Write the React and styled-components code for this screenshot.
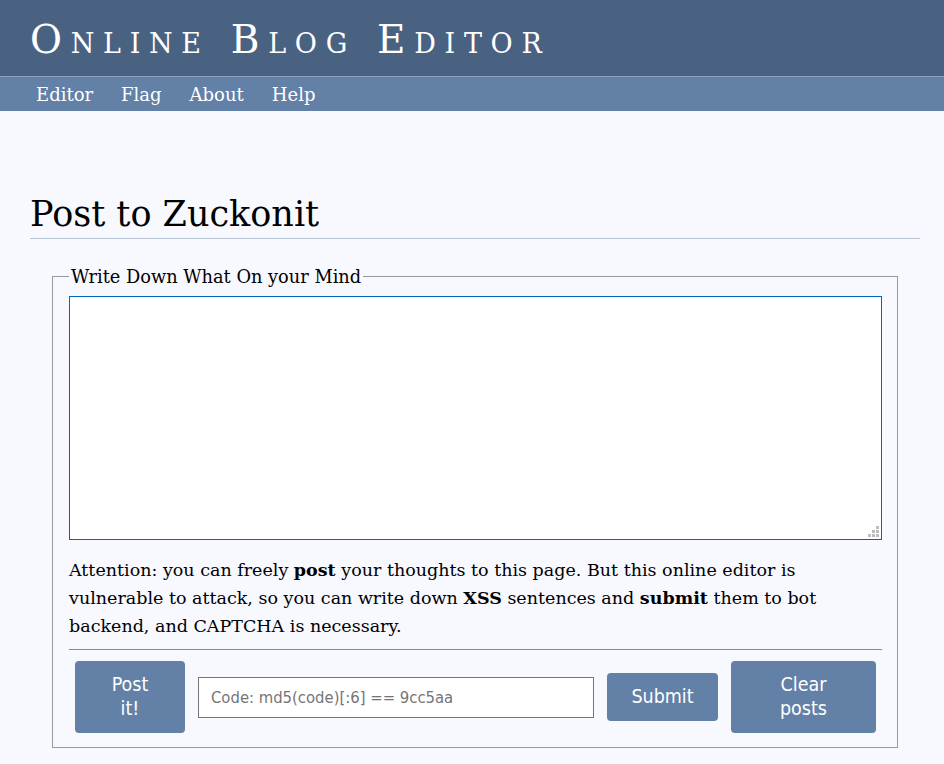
import React from "react";
import styled, { createGlobalStyle } from "styled-components";

const Global = createGlobalStyle`
  html, body { margin: 0; padding: 0; background: #f8f8ff; }
  body { font-family: "DejaVu Serif", Georgia, serif; color: #000; }
  * { box-sizing: border-box; }
`;

const Header = styled.header`
  background: #4a6282;
  height: 76px;
  display: flex;
  align-items: center;
  padding-left: 30px;
`;

const Title = styled.h1`
  margin: 0;
  color: #fff;
  font-family: "DejaVu Serif", Georgia, serif;
  font-weight: normal;
  font-size: 39px;
  font-variant: small-caps;
  letter-spacing: 8.7px;
  line-height: 1;
  padding-top: 2px;
`;

const Nav = styled.nav`
  background: #6380a6;
  border-top: 1px solid #8ea3c0;
  height: 35px;
  display: flex;
  align-items: center;
  padding-left: 36px;
  gap: 28px;
`;

const NavLink = styled.a`
  color: #fff;
  font-size: 18px;
  text-decoration: none;
  font-family: "DejaVu Serif", Georgia, serif;
`;

const Main = styled.main`
  padding: 83px 24px 16px 30px;
`;

const Heading = styled.h2`
  margin: 0;
  font-weight: normal;
  font-size: 35px;
  line-height: 40px;
  padding-bottom: 4px;
  border-bottom: 1px solid #b8c4d4;
`;

const Fieldset = styled.fieldset`
  margin: 27px 22px 0 22px;
  border: 1px solid #9a9a9a;
  padding: 9px 15px 14px 16px;
`;

const Legend = styled.legend`
  font-size: 17.8px;
  padding: 0 2px;
  margin-left: 0;
`;

const AreaWrap = styled.div`
  position: relative;
`;

const TextArea = styled.textarea`
  display: block;
  width: 100%;
  height: 244px;
  border: 1px solid #0067c0;
  background: #fff;
  resize: none;
  outline: none;
`;

const Grip = styled.svg`
  position: absolute;
  right: 3px;
  bottom: 3px;
  width: 11px;
  height: 11px;
`;

const Note = styled.p`
  margin: 16px 0 0 0;
  font-size: 17.5px;
  line-height: 28px;
`;

const Rule = styled.hr`
  margin: 9px 0 0 0;
  border: none;
  border-top: 1px solid #8a8a8a;
`;

const Actions = styled.div`
  display: flex;
  align-items: center;
  gap: 13px;
  padding: 11px 6px 0 6px;
`;

const Button = styled.button`
  background: #6380a6;
  color: #fff;
  border: none;
  border-radius: 4px;
  font-family: "DejaVu Sans Condensed", "DejaVu Sans", Tahoma, sans-serif;
  font-size: 19.5px;
  line-height: 24px;
  width: ${(p) => p.$w}px;
  height: ${(p) => p.$h}px;
  padding: 0 ${(p) => p.$pad}px;
  flex-shrink: 0;
`;

const CodeInput = styled.input`
  width: 396px;
  height: 41px;
  border: 1px solid #767676;
  background: #fff;
  padding: 0 12px;
  font-family: "DejaVu Sans Condensed", "DejaVu Sans", Tahoma, sans-serif;
  font-size: 16.5px;
  &::placeholder { color: #757575; }
`;

export default function App() {
  return (
    <>
      <Global />
      <Header>
        <Title>Online Blog Editor</Title>
      </Header>
      <Nav>
        <NavLink href="#">Editor</NavLink>
        <NavLink href="#">Flag</NavLink>
        <NavLink href="#">About</NavLink>
        <NavLink href="#">Help</NavLink>
      </Nav>
      <Main>
        <Heading>Post to Zuckonit</Heading>
        <Fieldset>
          <Legend>Write Down What On your Mind</Legend>
          <AreaWrap>
            <TextArea />
            <Grip viewBox="0 0 11 11">
              <rect x="8" y="0" width="3" height="3" fill="#bdbdbd" />
              <rect x="4" y="4" width="3" height="3" fill="#bdbdbd" />
              <rect x="8" y="4" width="3" height="3" fill="#bdbdbd" />
              <rect x="0" y="8" width="3" height="3" fill="#bdbdbd" />
              <rect x="4" y="8" width="3" height="3" fill="#bdbdbd" />
              <rect x="8" y="8" width="3" height="3" fill="#bdbdbd" />
            </Grip>
          </AreaWrap>
          <Note>
            Attention: you can freely <b>post</b> your thoughts to this page. But this online editor is
            vulnerable to attack, so you can write down <b>XSS</b> sentences and <b>submit</b> them to bot
            backend, and CAPTCHA is necessary.
          </Note>
          <Rule />
          <Actions>
            <Button $w={110} $h={72} $pad={26}>Post it!</Button>
            <CodeInput placeholder="Code: md5(code)[:6] == 9cc5aa" />
            <Button $w={111} $h={48} $pad={8}>Submit</Button>
            <Button $w={145} $h={72} $pad={26}>Clear posts</Button>
          </Actions>
        </Fieldset>
      </Main>
    </>
  );
}
